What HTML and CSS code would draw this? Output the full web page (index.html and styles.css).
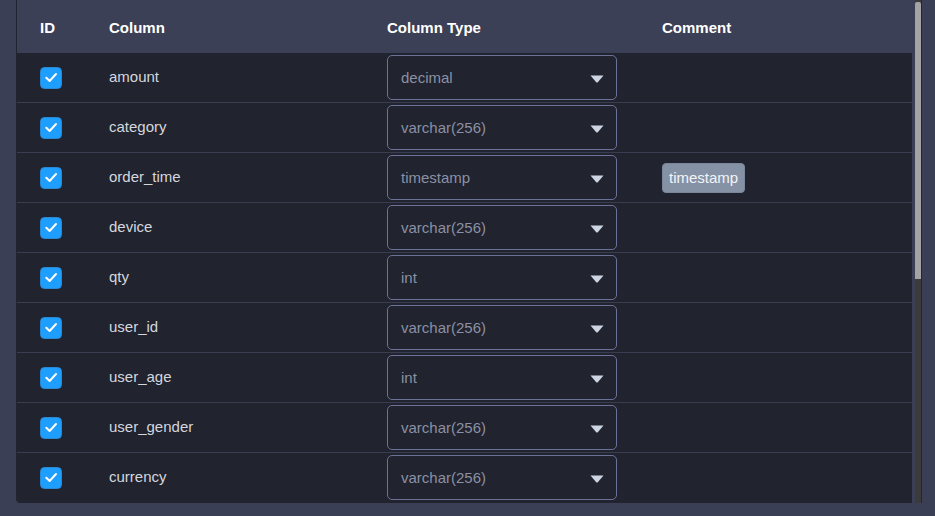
FILE: index.html
```html
<!DOCTYPE html>
<html>
<head>
<meta charset="utf-8">
<link rel="stylesheet" href="styles.css">
</head>
<body>
<div class="frame">
  <div class="table">
    <div class="row head">
      <div class="cell">ID</div>
      <div class="cell">Column</div>
      <div class="cell">Column Type</div>
      <div class="cell">Comment</div>
    </div>
    <div id="rows"></div>
  </div>
  <div class="gutter"></div>
  <div class="scrollbar"><div class="thumb"></div><div class="track"></div></div>
</div>
<script src="app.js"></script>
</body>
</html>
```
FILE: app.js
```js
const data = [
  ["amount", "decimal", ""],
  ["category", "varchar(256)", ""],
  ["order_time", "timestamp", "timestamp"],
  ["device", "varchar(256)", ""],
  ["qty", "int", ""],
  ["user_id", "varchar(256)", ""],
  ["user_age", "int", ""],
  ["user_gender", "varchar(256)", ""],
  ["currency", "varchar(256)", ""]
];
const check = '<svg class="chk" viewBox="0 0 22 22" width="22" height="22"><rect x="0.5" y="0.5" width="21" height="21" rx="4" fill="#1e9eff" stroke="#2b88d4"/><path d="M6.3 10.8 L9.6 14 L16 7" fill="none" stroke="#fff" stroke-width="2" stroke-linecap="round" stroke-linejoin="round"/></svg>';
const arrow = '<svg class="arrow" viewBox="0 0 14 8" width="14" height="8"><path d="M0.5 0.5 H13.5 L8 7 Q7 8 6 7 Z" fill="#cdd5e4"/></svg>';
const rows = document.getElementById("rows");
rows.innerHTML = data.map(([name, type, comment]) =>
  `<div class="row body">
    <div class="cell">${check}</div>
    <div class="cell name">${name}</div>
    <div class="cell"><div class="select"><span>${type}</span>${arrow}</div></div>
    <div class="cell">${comment ? `<span class="badge">${comment}</span>` : ""}</div>
  </div>`).join("");
```
FILE: styles.css
```css
html, body {
  margin: 0;
  padding: 0;
  background: #3a3f55;
  font-family: "Liberation Sans", Arial, sans-serif;
}
.frame {
  display: flex;
  margin-left: 16px;
  width: 904px;
  height: 503px;
  border-left: 1px solid #22252f;
  border-right: 1px solid #23262f;
  border-bottom-left-radius: 4px;
  overflow: hidden;
}
.table {
  width: 895px;
  background: #21232e;
  border-bottom-left-radius: 3px;
}
.row {
  display: grid;
  grid-template-columns: 69px 278px 275px 1fr;
  align-items: center;
}
.cell {
  padding-left: 23px;
  display: flex;
  align-items: center;
}
.head {
  box-sizing: border-box;
  height: 53px;
  padding-top: 2px;
  background: #3b4057;
  color: #ffffff;
  font-weight: bold;
  font-size: 15px;
}
.body {
  height: 49px;
  border-bottom: 1px solid #393d50;
  color: #d4d7df;
  font-size: 15px;
}
.body:last-child {
  border-bottom-color: #21232e;
}
.name {
  padding-bottom: 3px;
}
.chk {
  display: block;
}
.select {
  box-sizing: border-box;
  width: 230px;
  height: 45px;
  border: 1px solid #6b7299;
  border-radius: 5px;
  display: flex;
  align-items: center;
  justify-content: space-between;
  padding: 0 12px 0 13px;
  color: #8b90a4;
  font-size: 15px;
}
.arrow {
  display: block;
  margin-top: 3px;
}
.badge {
  background: #8592a6;
  color: #f3f4f6;
  border: 1px solid #7a879b;
  border-radius: 4px;
  padding: 5px 6px 6px;
  font-size: 15px;
  line-height: 17px;
}
.gutter {
  width: 3px;
  background: #3a3f55;
}
.scrollbar {
  width: 6px;
  display: flex;
  flex-direction: column;
  background: #3c3b3b;
}
.thumb {
  margin-top: 2px;
  height: 277px;
  background: #a3a3a3;
  border-radius: 2px 2px 0 0;
}
.track {
  flex: 1;
}
```
